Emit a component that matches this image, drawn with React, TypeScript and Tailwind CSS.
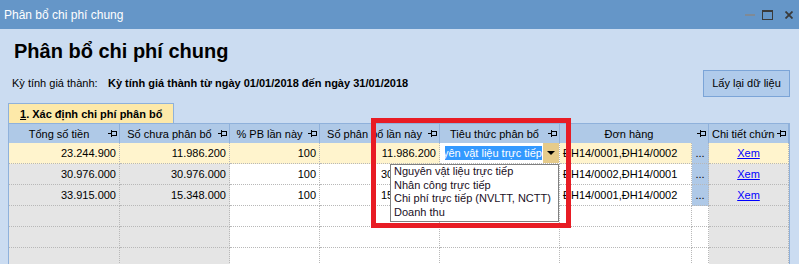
import React from "react";

const Pin = () => (
  <svg width="9" height="7" viewBox="0 0 9 7" className="shrink-0" fill="none" stroke="#000" strokeWidth="1" shapeRendering="crispEdges">
    <line x1="0" y1="3.5" x2="3" y2="3.5" />
    <line x1="3.5" y1="0" x2="3.5" y2="7" />
    <rect x="3.5" y="1.5" width="5" height="4" />
  </svg>
);

const HeaderCell = ({ w, label }: { w: string; label: string }) => (
  <div className={`${w} h-full flex items-center border-r border-[#8fb1db] pl-[3px] pr-[2px]`}>
    <span className="flex-1 min-w-0 overflow-hidden whitespace-nowrap text-center pt-[1px]">{label}</span>
    <span className="ml-[2px]"><Pin /></span>
  </div>
);

type RowData = {
  a: string;
  b: string;
  c: string;
  d: string;
  e: string;
} | null;

const rows: RowData[] = [
  { a: "23.244.900", b: "11.986.200", c: "100", d: "11.986.200", e: "ĐH14/0001,ĐH14/0002" },
  { a: "30.976.000", b: "30.976.000", c: "100", d: "30.976.000", e: "ĐH14/0002,ĐH14/0001" },
  { a: "33.915.000", b: "15.348.000", c: "100", d: "15.348.000", e: "ĐH14/0001,ĐH14/0002" },
  null,
  null,
  null,
];

const cellBase = "h-full border-r border-b border-dotted border-[#b8b8b8] flex items-center whitespace-nowrap overflow-hidden";

function DataRow({ r, selected }: { r: RowData; selected: boolean }) {
  const gray = selected ? "bg-[#fff4cd]" : "bg-[#e5e5e5]";
  const white = selected ? "bg-[#fff4cd]" : "bg-white";
  return (
    <div className="flex h-[21px] shrink-0">
      <div className={`w-[111px] ${cellBase} ${gray} justify-end pr-[3px]`}>{r?.a}</div>
      <div className={`w-[110px] ${cellBase} ${gray} justify-end pr-[3px]`}>{r?.b}</div>
      <div className={`w-[90px] ${cellBase} ${white} justify-end pr-[3px]`}>{r?.c}</div>
      <div className={`w-[120px] ${cellBase} ${white} justify-end pr-[3px]`}>{r?.d}</div>
      {selected ? (
        <div className={`w-[120px] ${cellBase} bg-white`}>
          <div className="ml-[5px] w-[97px] h-[14px] bg-[#3399ff] text-white flex justify-end overflow-hidden leading-[14px]">
            <span className="whitespace-nowrap">Nguyên vật liệu trực tiếp</span>
          </div>
          <div className="ml-[1px] w-[16px] h-full bg-[#e6cb8a] flex items-center justify-center">
            <svg width="8" height="4" viewBox="0 0 8 4"><path d="M0 0 H8 L4 4 Z" fill="#000" /></svg>
          </div>
        </div>
      ) : (
        <div className={`w-[120px] ${cellBase} ${white}`}></div>
      )}
      <div className={`w-[132px] ${cellBase} ${white} pl-[3px]`}>{r?.e}</div>
      <div className={`w-[17px] ${cellBase} ${r ? "bg-[#afc9e7]" : "bg-white"} justify-center`}>{r ? "..." : ""}</div>
      <div className={`w-[80px] ${cellBase} ${gray} justify-center`}>
        {r ? <span className="text-[#0000ff] underline">Xem</span> : null}
      </div>
    </div>
  );
}

export default function App() {
  return (
    <div className="w-[799px] h-[264px] overflow-hidden bg-[#cbdcf1] relative font-['Liberation_Sans',Arial,sans-serif] text-[11px] text-black flex flex-col">
      {/* Title bar */}
      <div className="h-[29px] shrink-0 bg-[#6596c8] flex items-center pl-[4px] pr-[6px]">
        <span className="text-white text-[12px] pt-[1px]">Phân bổ chi phí chung</span>
        <div className="ml-auto flex items-center">
          <div className="w-[10px] h-[2px] bg-[#7f8a96] mr-[7px] mt-[1px]"></div>
          <div className="w-[11px] h-[10px] border border-[#3a3a3a] border-t-2 mr-[12px]"></div>
          <svg width="8" height="8" viewBox="0 0 8 8" className="mr-[0px]">
            <path d="M0.5 0.5 L7.5 7.5 M7.5 0.5 L0.5 7.5" stroke="#3a3a3a" strokeWidth="1.8" />
          </svg>
        </div>
      </div>

      {/* Heading */}
      <div className="mt-[10px] pl-[14px] h-[24px] leading-[24px] text-[20px] font-bold shrink-0">Phân bổ chi phí chung</div>

      {/* Info row */}
      <div className="mt-[7px] h-[27px] flex items-center pl-[12px] pr-[9px] shrink-0">
        <span className="w-[96px] pb-[1px]">Kỳ tính giá thành:</span>
        <span className="font-bold pb-[1px]">Kỳ tính giá thành từ ngày 01/01/2018 đến ngày 31/01/2018</span>
        <div className="ml-auto w-[87px] h-[27px] border border-[#7ba4d7] bg-[#b0cbeb] flex items-center justify-center">
          <span className="pb-[1px]">Lấy lại dữ liệu</span>
        </div>
      </div>

      {/* Tab */}
      <div className="mt-[6px] flex shrink-0 ml-[8px]">
        <div className="w-[166px] h-[20px] bg-[#fde9a9] border border-b-0 border-[#8fb1db] font-bold flex items-center pl-[11px] pt-[1px]">
          <span><span className="underline">1</span>. Xác định chi phí phân bổ</span>
        </div>
      </div>

      {/* Grid */}
      <div className="ml-[8px] w-[782px] flex-1 border-l border-r border-[#8fb1db] bg-white flex flex-col">
        <div className="flex h-[20px] shrink-0 bg-[#afc9e7] border-t border-[#8fb1db]">
          <HeaderCell w="w-[111px]" label="Tổng số tiền" />
          <HeaderCell w="w-[110px]" label="Số chưa phân bổ" />
          <HeaderCell w="w-[90px]" label="% PB lần này" />
          <HeaderCell w="w-[120px]" label="Số phân bổ lần này" />
          <HeaderCell w="w-[120px]" label="Tiêu thức phân bổ" />
          <HeaderCell w="w-[149px]" label="Đơn hàng" />
          <HeaderCell w="w-[80px]" label="Chi tiết chứng từ" />
        </div>
        {rows.map((r, i) => (
          <DataRow key={i} r={r} selected={i === 0} />
        ))}
      </div>

      {/* Dropdown list */}
      <div className="absolute left-[390px] top-[164px] w-[169px] h-[58px] bg-white border border-[#808080] pl-[3px] leading-[13.5px] text-[#1a0f24]">
        <div className="whitespace-nowrap">Nguyên vật liệu trực tiếp</div>
        <div className="whitespace-nowrap">Nhân công trực tiếp</div>
        <div className="whitespace-nowrap">Chi phí trực tiếp (NVLTT, NCTT)</div>
        <div className="whitespace-nowrap">Doanh thu</div>
      </div>

      {/* Red annotation box */}
      <div className="absolute left-[371px] top-[118px] w-[200px] h-[110px] border-[5px] border-[#e81c24] pointer-events-none"></div>
    </div>
  );
}
